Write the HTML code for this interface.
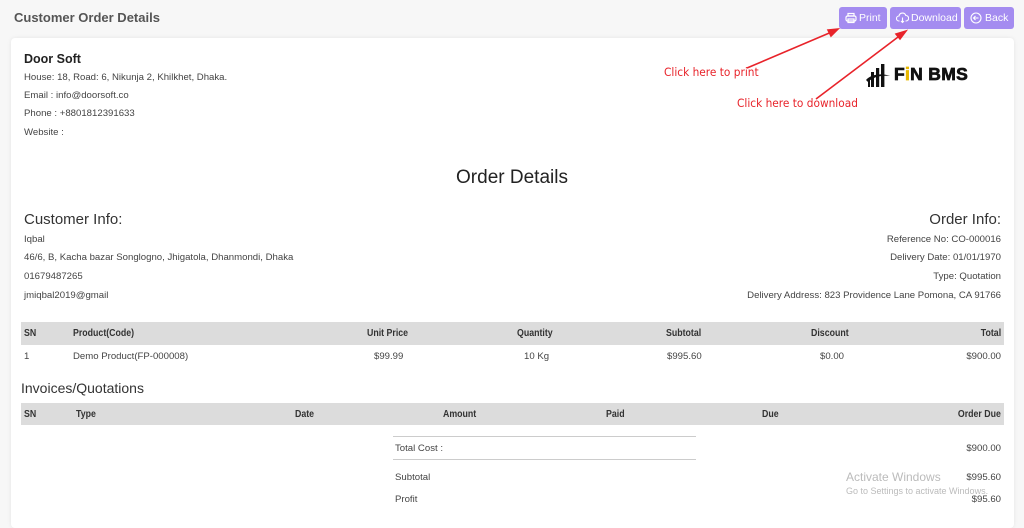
<!DOCTYPE html>
<html><head><meta charset="utf-8"><style>
*{margin:0;padding:0;box-sizing:border-box}
body{width:1024px;height:514px;background:#f7f7f7;font-family:"Liberation Sans",sans-serif;color:#333;position:relative;overflow:hidden}
.a{position:absolute;white-space:nowrap}
.card{position:absolute;left:11px;top:38px;width:1003px;height:490px;background:#fff;border-radius:4px;box-shadow:0 0 4px rgba(0,0,0,.08)}
.s{font-size:9.6px;color:#444}
.btn{position:absolute;top:7px;height:22px;background:#a48cf0;border-radius:3px;color:#fff;font-size:10.5px;line-height:22px;padding-left:22px}
.bar{position:absolute;left:21px;width:983px;background:#dcdcdc}
.h{font-size:10px;font-weight:bold;color:#333;transform:scaleX(.88);transform-origin:left}
.hr{transform-origin:right}
.r{text-align:right}
.red{color:#e8232a;font-size:11.5px;font-family:"DejaVu Sans",sans-serif;transform:scaleX(.92);transform-origin:left}
.ln{position:absolute;left:393px;width:303px;border-top:1px solid #aaa}
</style></head><body>
<div class="a" style="left:14px;top:10px;font-size:13px;font-weight:bold;color:#555">Customer Order Details</div>
<div class="btn" style="left:839px;width:48px;padding-left:20px">Print</div>
<div class="btn" style="left:890px;width:71px;padding-left:21px">Download</div>
<div class="btn" style="left:964px;width:50px;padding-left:21px">Back</div>
<svg class="a" style="left:845px;top:12px" width="12" height="12" viewBox="0 0 12 12" fill="none" stroke="#fff" stroke-width="1.2"><rect x="1" y="4" width="10" height="5" rx="1.5"/><rect x="3" y="1.5" width="6" height="2.5"/><rect x="3" y="7" width="6" height="3.5"/></svg>
<svg class="a" style="left:896px;top:12px" width="13" height="12" viewBox="0 0 13 12" fill="none" stroke="#fff" stroke-width="1.1"><path d="M3.5 9H3a2.5 2.5 0 0 1 0-5 3.5 3.5 0 0 1 6.8-.5A2.3 2.3 0 0 1 10 9h-.5"/><path d="M6.5 5.5v5M5 9l1.5 1.5L8 9"/></svg>
<svg class="a" style="left:970px;top:12px" width="12" height="12" viewBox="0 0 12 12" fill="none" stroke="#fff" stroke-width="1.1"><circle cx="6" cy="6" r="5"/><path d="M8.5 6h-5M5.5 4L3.5 6l2 2"/></svg>
<div class="card"></div>
<div class="a" style="left:24px;top:52px;font-size:12.5px;font-weight:bold;color:#222">Door Soft</div>
<div class="a s" style="left:24px;top:72px">House: 18, Road: 6, Nikunja 2, Khilkhet, Dhaka.</div>
<div class="a s" style="left:24px;top:90px">Email : info@doorsoft.co</div>
<div class="a s" style="left:24px;top:108px">Phone : +8801812391633</div>
<div class="a s" style="left:24px;top:127px">Website :</div>
<div class="a red" style="left:664px;top:65px">Click here to print</div>
<div class="a red" style="left:737px;top:96px">Click here to download</div>
<svg class="a" style="left:0;top:0" width="1024" height="120"><g stroke="#e8232a" stroke-width="1.6" fill="#e8232a"><line x1="747" y1="68" x2="834" y2="31"/><polygon points="838,29 828,30 831,36"/><line x1="816" y1="99" x2="902" y2="34"/><polygon points="906,31 896,34 900,39"/></g></svg>
<svg class="a" style="left:866px;top:63px" width="24" height="26" viewBox="0 0 24 26" fill="#111"><rect x="5" y="9" width="3" height="15"/><rect x="10" y="5" width="3.2" height="19"/><rect x="15" y="1" width="3.4" height="23"/><path d="M0 17c5-6 16-7 24-4-9-1-17 1-22 6z"/><rect x="2" y="16" width="2" height="8"/></svg>
<div class="a" style="left:894px;top:64px;font-size:17.5px;font-weight:900;color:#111;letter-spacing:.3px;-webkit-text-stroke:.7px #111">F<span style="color:#e8b800;-webkit-text-stroke:.7px #e8b800">i</span>N BMS</div>
<div class="a" style="left:0;width:1024px;text-align:center;top:167px;font-size:19px;color:#222">Order Details</div>
<div class="a" style="left:24px;top:211px;font-size:15px;color:#333">Customer Info:</div>
<div class="a s" style="left:24px;top:234px">Iqbal</div>
<div class="a s" style="left:24px;top:252px">46/6, B, Kacha bazar Songlogno, Jhigatola, Dhanmondi, Dhaka</div>
<div class="a s" style="left:24px;top:271px">01679487265</div>
<div class="a s" style="left:24px;top:290px">jmiqbal2019@gmail</div>
<div class="a r" style="right:23px;top:211px;font-size:15px;color:#333">Order Info:</div>
<div class="a s r" style="right:23px;top:234px">Reference No: CO-000016</div>
<div class="a s r" style="right:23px;top:252px">Delivery Date: 01/01/1970</div>
<div class="a s r" style="right:23px;top:271px">Type: Quotation</div>
<div class="a s r" style="right:23px;top:290px">Delivery Address: 823 Providence Lane Pomona, CA 91766</div>
<div class="bar" style="top:322px;height:23px"></div>
<div class="a h" style="left:24px;top:328px">SN</div>
<div class="a h" style="left:73px;top:328px">Product(Code)</div>
<div class="a h" style="left:367px;top:328px">Unit Price</div>
<div class="a h" style="left:517px;top:328px">Quantity</div>
<div class="a h" style="left:666px;top:328px">Subtotal</div>
<div class="a h" style="left:811px;top:328px">Discount</div>
<div class="a h hr r" style="right:23px;top:328px">Total</div>
<div class="a s" style="left:24px;top:351px">1</div>
<div class="a s" style="left:73px;top:351px">Demo Product(FP-000008)</div>
<div class="a s" style="left:374px;top:351px">$99.99</div>
<div class="a s" style="left:524px;top:351px">10 Kg</div>
<div class="a s" style="left:667px;top:351px">$995.60</div>
<div class="a s" style="left:820px;top:351px">$0.00</div>
<div class="a s r" style="right:23px;top:351px">$900.00</div>
<div class="a" style="left:21px;top:380px;font-size:14px;color:#333">Invoices/Quotations</div>
<div class="bar" style="top:403px;height:22px"></div>
<div class="a h" style="left:24px;top:409px">SN</div>
<div class="a h" style="left:76px;top:409px">Type</div>
<div class="a h" style="left:295px;top:409px">Date</div>
<div class="a h" style="left:443px;top:409px">Amount</div>
<div class="a h" style="left:606px;top:409px">Paid</div>
<div class="a h" style="left:762px;top:409px">Due</div>
<div class="a h hr r" style="right:23px;top:409px">Order Due</div>
<div class="ln" style="top:436px;border-color:#ccc"></div>
<div class="a s" style="left:395px;top:443px">Total Cost :</div>
<div class="a s r" style="right:23px;top:443px">$900.00</div>
<div class="ln" style="top:459px;border-color:#ccc"></div>
<div class="a s" style="left:395px;top:472px">Subtotal</div>
<div class="a s r" style="right:23px;top:472px">$995.60</div>
<div class="a s" style="left:395px;top:494px">Profit</div>
<div class="a s r" style="right:23px;top:494px">$95.60</div>
<div class="a" style="left:846px;top:470px;font-size:12px;color:#bbb">Activate Windows</div>
<div class="a" style="left:846px;top:486px;font-size:9px;color:#bbb">Go to Settings to activate Windows.</div>
</body></html>
